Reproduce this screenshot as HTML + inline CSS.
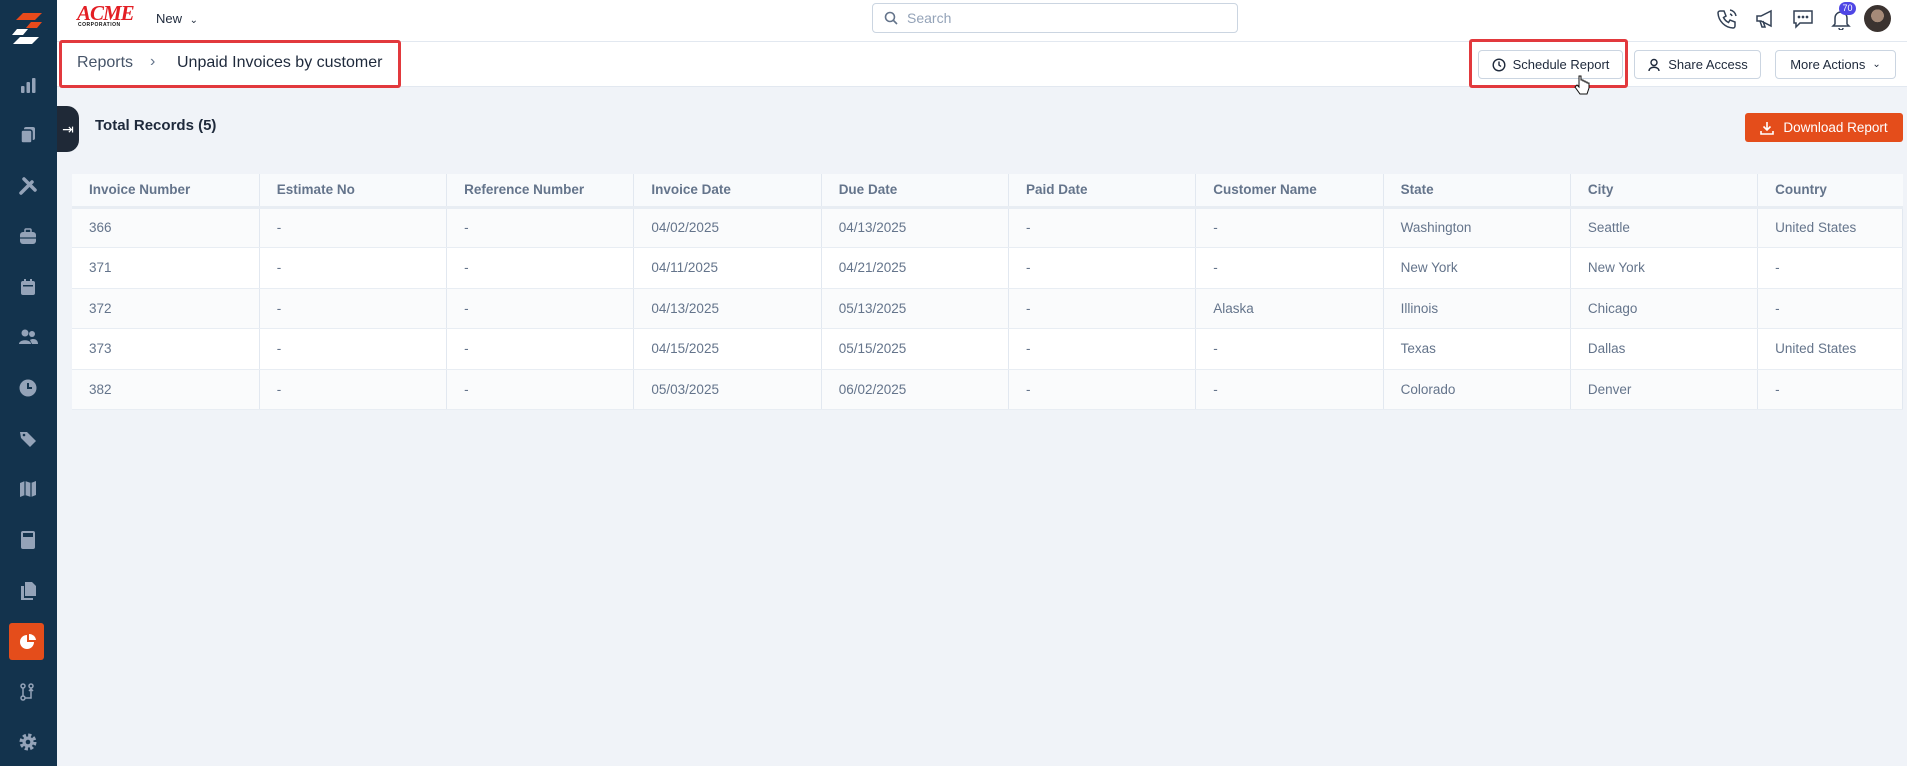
<!DOCTYPE html>
<html><head><meta charset="utf-8"><style>
*{box-sizing:border-box;margin:0;padding:0}
body{width:1907px;height:766px;overflow:hidden;background:#f0f3f8;font-family:"Liberation Sans",sans-serif;position:relative;color:#1e293b}
.side{position:absolute;left:0;top:0;width:57px;height:766px;background:#13334d}
.ic{position:absolute;left:16px;width:24px;height:24px;display:flex;align-items:center;justify-content:center}
.top{position:absolute;left:57px;top:0;right:0;height:42px;background:#fff;border-bottom:1px solid #e2e8f0}
.bc{position:absolute;left:57px;top:42px;right:0;height:45px;background:#fff;border-bottom:1px solid #e2e8f0}
.btn{position:absolute;top:50px;height:29px;border:1px solid #cbd5e1;border-radius:4px;background:#fff;font-size:13px;color:#1e293b;display:flex;align-items:center;justify-content:center;gap:7px}
table{position:absolute;left:72px;top:174px;width:1831px;border-collapse:collapse;background:#fff;font-size:13.5px;table-layout:fixed}
th{height:33px;background:#f8fafc;color:#64748b;font-weight:bold;text-align:left;padding-left:17px;border-right:1px solid #e2e8f0;border-bottom:3px solid #e8edf3;font-size:13.5px}
td{height:40.5px;color:#64748b;padding-left:17px;border-right:1px solid #e2e8f0;border-bottom:1px solid #e8edf3}
tr:nth-child(even) td{background:#fafbfc}
</style></head><body>
<div class="side">
 <svg style="position:absolute;left:10px;top:12px" width="34" height="34" viewBox="0 0 34 34"><polygon points="13,1 32,1 25,8 6,8" fill="#e84a1b"/><polygon points="21,10 32,10 27,16 16,16" fill="#e84a1b"/><polygon points="7,17 18,17 13,23 2,23" fill="#fff"/><polygon points="10,25 29,25 22,32 3,32" fill="#fff"/></svg>
 <div class="ic" style="top:73px"><svg width="18" height="18"><rect x="2" y="10" width="3.5" height="7" rx="1" fill="#94a3b8"/><rect x="7.5" y="6" width="3.5" height="11" rx="1" fill="#94a3b8"/><rect x="13" y="2" width="3.5" height="15" rx="1" fill="#94a3b8"/></svg></div>
 <div class="ic" style="top:123px"><svg width="18" height="18"><rect x="5" y="1" width="11" height="13" rx="2" fill="#94a3b8"/><rect x="2" y="4" width="11" height="13" rx="2" fill="#94a3b8" stroke="#13334d" stroke-width="1.5"/></svg></div>
 <div class="ic" style="top:174px"><svg width="20" height="20"><path d="M3 17L14 6M6 3L17 14" stroke="#94a3b8" stroke-width="3.5" stroke-linecap="round"/></svg></div>
 <div class="ic" style="top:224px"><svg width="20" height="18"><rect x="2" y="5" width="16" height="12" rx="3" fill="#94a3b8"/><rect x="7" y="2" width="6" height="4" rx="1" fill="none" stroke="#94a3b8" stroke-width="1.5"/><path d="M2 11h16" stroke="#13334d" stroke-width="1.2"/></svg></div>
 <div class="ic" style="top:275px"><svg width="18" height="18"><rect x="2" y="3" width="14" height="14" rx="2" fill="#94a3b8"/><rect x="4" y="7" width="10" height="1.5" fill="#13334d"/><rect x="5" y="1" width="2" height="4" fill="#94a3b8"/><rect x="11" y="1" width="2" height="4" fill="#94a3b8"/></svg></div>
 <div class="ic" style="top:325px"><svg width="20" height="18"><circle cx="7" cy="5" r="3.5" fill="#94a3b8"/><circle cx="14" cy="6" r="3" fill="#94a3b8"/><path d="M1 16c0-5 12-5 12 0z" fill="#94a3b8"/><path d="M12 12c3-2 8-1 8 4h-6z" fill="#94a3b8"/></svg></div>
 <div class="ic" style="top:376px"><svg width="20" height="20"><circle cx="10" cy="10" r="8.5" fill="#94a3b8"/><path d="M10 5v5h4" stroke="#13334d" stroke-width="2" fill="none"/></svg></div>
 <div class="ic" style="top:427px"><svg width="20" height="20"><path d="M2 3l7 0 9 9-6 6-9-9z" fill="#94a3b8"/><circle cx="6" cy="6" r="1.3" fill="#13334d"/></svg></div>
 <div class="ic" style="top:477px"><svg width="18" height="18"><path d="M1 3l5-2 6 2 5-2v14l-5 2-6-2-5 2z" fill="#94a3b8"/><path d="M6 1v14M12 3v14" stroke="#13334d" stroke-width="1.2"/></svg></div>
 <div class="ic" style="top:528px"><svg width="16" height="20"><rect x="1" y="1" width="14" height="18" rx="2" fill="#94a3b8"/><rect x="3" y="3" width="10" height="4" fill="#13334d"/></svg></div>
 <div class="ic" style="top:579px"><svg width="18" height="20"><path d="M6 1h7l4 4v10H6z" fill="#94a3b8"/><path d="M2 5h3v12h9v2H2z" fill="#94a3b8"/></svg></div>
 <div style="position:absolute;left:9px;top:623px;width:35px;height:37px;background:#e44d1b;border-radius:3px"></div>
 <div class="ic" style="top:630px"><svg width="18" height="18"><path d="M8 2a7 7 0 1 0 7 7H8z" fill="#fff"/><path d="M10 1a7 7 0 0 1 7 6h-7z" fill="#fff"/></svg></div>
 <div class="ic" style="top:680px"><svg width="18" height="18" fill="none" stroke="#94a3b8" stroke-width="1.5"><circle cx="4" cy="3" r="2"/><circle cx="12" cy="3" r="2"/><circle cx="4" cy="15" r="2"/><path d="M4 5v8M6 15h6V6M10 8l2-2 2 2"/></svg></div>
 <div class="ic" style="top:730px"><svg width="20" height="20"><circle cx="10" cy="10" r="6.5" fill="none" stroke="#94a3b8" stroke-width="4" stroke-dasharray="3 2.1"/><circle cx="10" cy="10" r="5.5" fill="#94a3b8"/><circle cx="10" cy="10" r="2.3" fill="#13334d"/></svg></div>
</div>
<div style="position:absolute;left:57px;top:106px;width:22px;height:46px;background:#1f2937;border-radius:0 12px 12px 0;color:#fff;font-size:14px;display:flex;align-items:center;justify-content:center">⇥</div>
<div class="top">
 <div style="position:absolute;left:20px;top:3px;font-family:'Liberation Serif',serif;font-weight:bold;font-size:21px;color:#e31e24;font-style:italic;letter-spacing:-1px;line-height:20px">ACME</div>
 <div style="position:absolute;left:21px;top:22px;font-size:5px;font-weight:bold;letter-spacing:.5px;color:#111">CORPORATION</div>
 <div style="position:absolute;left:99px;top:11px;font-size:13px;color:#1e293b">New <span style="font-size:10px;margin-left:4px">⌄</span></div>
 <div style="position:absolute;left:815px;top:3px;width:366px;height:30px;border:1px solid #cbd5e1;border-radius:4px;padding-left:34px;line-height:28px;color:#94a3b8;font-size:14px">Search
  <svg style="position:absolute;left:11px;top:7px" width="14" height="14" fill="none" stroke="#64748b" stroke-width="1.6"><circle cx="6" cy="6" r="4.5"/><path d="M9.5 9.5L13 13"/></svg></div>
 <svg style="position:absolute;left:1659px;top:8px" width="22" height="22" fill="none" stroke="#334155" stroke-width="1.5"><path d="M4 3h4l2 5-2.5 1.5a11 11 0 0 0 5 5L14 12l5 2v4a2 2 0 0 1-2 2A16 16 0 0 1 2 5a2 2 0 0 1 2-2"/><path d="M14 2a7 7 0 0 1 6 6M14 6a3 3 0 0 1 2 2"/></svg>
 <svg style="position:absolute;left:1697px;top:8px" width="22" height="22" fill="none" stroke="#334155" stroke-width="1.5"><path d="M3 8h4l10-5v15L7 13H3z"/><path d="M6 13l2 6h3l-2-6"/></svg>
 <svg style="position:absolute;left:1735px;top:7px" width="22" height="22" fill="none" stroke="#334155" stroke-width="1.5"><path d="M2 4h18v12H8l-4 4v-4H2z"/><circle cx="7" cy="10" r=".6"/><circle cx="11" cy="10" r=".6"/><circle cx="15" cy="10" r=".6"/></svg>
 <svg style="position:absolute;left:1773px;top:8px" width="22" height="22" fill="none" stroke="#334155" stroke-width="1.5"><path d="M5 16V10a6 6 0 0 1 12 0v6l2 2H3z"/><path d="M9 20a2 2 0 0 0 4 0"/></svg>
 <div style="position:absolute;left:1782px;top:2px;width:17px;height:13px;border-radius:7px;background:#4f46e5;color:#fff;font-size:9px;text-align:center;line-height:13px">70</div>
 <div style="position:absolute;left:1807px;top:5px;width:27px;height:27px;border-radius:50%;background:radial-gradient(circle at 50% 40%,#a58a78 0 30%,#3b3330 31% 100%)"></div>
</div>
<div class="bc">
 <div style="position:absolute;left:20px;top:12px;font-size:16px;color:#475569">Reports</div>
 <div style="position:absolute;left:93px;top:11px;font-size:16px;color:#64748b">›</div>
 <div style="position:absolute;left:120px;top:12px;font-size:16px;color:#1e293b">Unpaid Invoices by customer</div>
</div>
<div style="position:absolute;left:59px;top:40px;width:342px;height:48px;border:3px solid #e2393d;border-radius:3px"></div>
<div class="btn" style="left:1478px;width:145px"><svg width="14" height="14" fill="none" stroke="#1e293b" stroke-width="1.4"><circle cx="7" cy="7" r="5.8"/><path d="M7 3.5V7l2 1.5"/></svg>Schedule Report</div>
<div style="position:absolute;left:1469px;top:39px;width:159px;height:49px;border:3px solid #e2393d;border-radius:3px"></div>
<div class="btn" style="left:1634px;width:127px"><svg width="14" height="14" fill="none" stroke="#1e293b" stroke-width="1.4"><circle cx="7" cy="4.5" r="3"/><path d="M2 13c0-5 10-5 10 0"/></svg>Share Access</div>
<div class="btn" style="left:1775px;width:121px">More Actions <span style="font-size:10px">⌄</span></div>
<svg style="position:absolute;left:1574px;top:74px" width="16" height="22"><path d="M5 2v11l-2-2-2 2 5 7h7l2-6v-5h-2V8h-2V7h-2V6H7V2z" fill="#fff" stroke="#111" stroke-width="1"/></svg>
<div style="position:absolute;left:95px;top:117px;font-size:15px;font-weight:bold;color:#1e293b">Total Records (5)</div>
<div style="position:absolute;left:1745px;top:113px;width:158px;height:29px;background:#e44d1b;border-radius:3px;color:#fff;font-size:13.5px;display:flex;align-items:center;justify-content:center;gap:9px"><svg width="14" height="14" fill="none" stroke="#fff" stroke-width="1.6"><path d="M7 1v8M3.5 5.5L7 9l3.5-3.5M1 10v3h12v-3"/></svg>Download Report</div>
<table>
<colgroup><col style="width:187.3px"><col style="width:187.3px"><col style="width:187.3px"><col style="width:187.3px"><col style="width:187.3px"><col style="width:187.3px"><col style="width:187.3px"><col style="width:187.3px"><col style="width:187.3px"><col></colgroup>
<tr><th>Invoice Number</th><th>Estimate No</th><th>Reference Number</th><th>Invoice Date</th><th>Due Date</th><th>Paid Date</th><th>Customer Name</th><th>State</th><th>City</th><th style="border-right:0">Country</th></tr>
<tr><td>366</td><td>-</td><td>-</td><td>04/02/2025</td><td>04/13/2025</td><td>-</td><td>-</td><td>Washington</td><td>Seattle</td><td>United States</td></tr>
<tr><td>371</td><td>-</td><td>-</td><td>04/11/2025</td><td>04/21/2025</td><td>-</td><td>-</td><td>New York</td><td>New York</td><td>-</td></tr>
<tr><td>372</td><td>-</td><td>-</td><td>04/13/2025</td><td>05/13/2025</td><td>-</td><td>Alaska</td><td>Illinois</td><td>Chicago</td><td>-</td></tr>
<tr><td>373</td><td>-</td><td>-</td><td>04/15/2025</td><td>05/15/2025</td><td>-</td><td>-</td><td>Texas</td><td>Dallas</td><td>United States</td></tr>
<tr><td>382</td><td>-</td><td>-</td><td>05/03/2025</td><td>06/02/2025</td><td>-</td><td>-</td><td>Colorado</td><td>Denver</td><td>-</td></tr>
</table>
</body></html>
